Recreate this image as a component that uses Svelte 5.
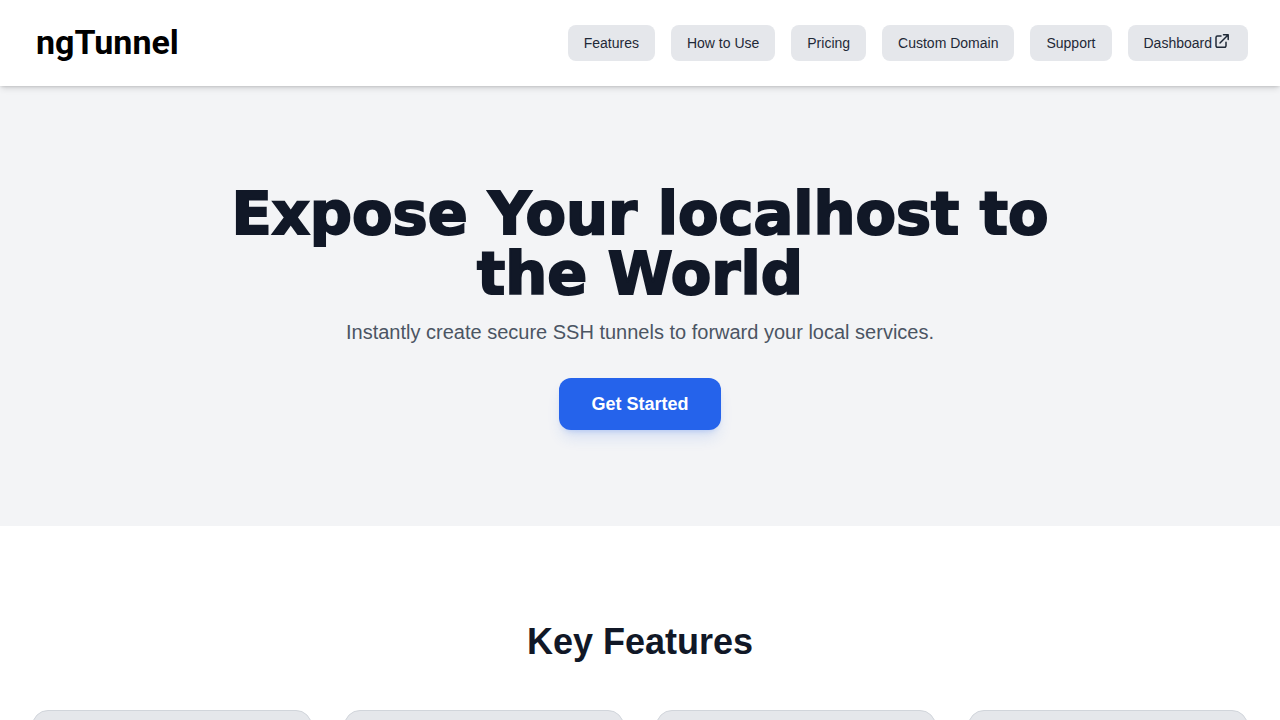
<script>
  const links = [
    { label: 'Features', href: '#features' },
    { label: 'How to Use', href: '#how-to-use' },
    { label: 'Pricing', href: '#pricing' },
    { label: 'Custom Domain', href: '#custom-domain' },
    { label: 'Support', href: '#support' },
    { label: 'Dashboard', href: '#dashboard', external: true }
  ];
  const cards = [1, 2, 3, 4];
</script>

<header>
  <a class="logo" href="#top">ngTunnel</a>
  <nav>
    {#each links as link}
      <a class="pill" href={link.href}>
        <span>{link.label}</span>
        {#if link.external}
          <svg viewBox="1 0 16 16" width="16" height="16" aria-hidden="true">
            <path d="M6 3H2.500A1.500 1.500 0 0 0 1 4.500V12.800A1.500 1.500 0 0 0 2.500 14.300H9.500A1.500 1.500 0 0 0 11 12.800V9.300M5 10L13 2M8.500 1.800H13.200V6.500" />
          </svg>
        {/if}
      </a>
    {/each}
  </nav>
</header>

<main>
  <section class="hero" id="top">
    <h1>Expose Your localhost to the World</h1>
    <p>Instantly create secure SSH tunnels to forward your local services.</p>
    <a class="cta" href="#how-to-use">Get Started</a>
  </section>

  <section class="features" id="features">
    <h2>Key Features</h2>
    <div class="grid">
      {#each cards as card (card)}
        <div class="card"></div>
      {/each}
    </div>
  </section>
</main>

<style>
  :global(body) {
    margin: 0;
    background: #fff;
    color: #111827;
    font-family: 'Liberation Sans', Arial, sans-serif;
  }

  a {
    text-decoration: none;
  }

  header {
    position: relative;
    display: flex;
    align-items: center;
    justify-content: space-between;
    padding: 16px 32px;
    background: #fff;
    box-shadow: 0 4px 6px -1px rgb(0 0 0 / 0.1), 0 2px 4px -2px rgb(0 0 0 / 0.1), 0 0 3px rgb(0 0 0 / 0.12);
  }

  .logo {
    padding: 0 4px 2px;
    color: #000;
    font: 700 34px/52px Roboto, sans-serif;
  }

  nav {
    display: flex;
    gap: 16px;
  }

  .pill {
    display: flex;
    align-items: flex-start;
    gap: 4px;
    padding: 8px 16px;
    border-radius: 8px;
    background: #e5e7eb;
    color: #1f2937;
    font-size: 14px;
    line-height: 20px;
    white-space: nowrap;
  }

  .pill svg {
    overflow: visible;
    fill: none;
    stroke: currentColor;
    stroke-width: 1.5;
    stroke-linecap: round;
    stroke-linejoin: round;
  }

  .hero {
    display: flex;
    flex-direction: column;
    align-items: center;
    padding: 98px 32px 96px;
    background: #f3f4f6;
    text-align: center;
  }

  h1 {
    margin: 0 0 14px;
    max-width: 896px;
    font: 900 59px/60px 'Arial Black', 'DejaVu Sans', sans-serif;
    -webkit-text-stroke: 2px currentColor;
  }

  .hero p {
    margin: 0 0 32px;
    color: #4b5563;
    font-size: 20px;
    line-height: 28px;
  }

  .cta {
    padding: 12px 32px;
    border-radius: 12px;
    background: #2563eb;
    color: #fff;
    font-size: 18px;
    font-weight: 700;
    line-height: 28px;
    box-shadow: 0 10px 15px -3px rgb(37 99 235 / 0.14), 0 4px 6px -4px rgb(37 99 235 / 0.3);
  }

  .features {
    padding: 96px 32px;
  }

  h2 {
    margin: 0 0 48px;
    font-size: 36px;
    line-height: 40px;
    text-align: center;
  }

  .grid {
    display: grid;
    grid-template-columns: repeat(4, 1fr);
    gap: 32px;
  }

  .card {
    min-height: 200px;
    border: 1px solid #d1d5db;
    border-radius: 16px;
    background: #e5e7eb;
  }
</style>
